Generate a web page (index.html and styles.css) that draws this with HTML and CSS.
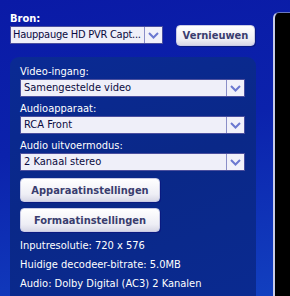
FILE: index.html
```html
<!DOCTYPE html>
<html>
<head>
<meta charset="utf-8">
<link rel="stylesheet" href="styles.css">
</head>
<body>
<div class="screen">
  <div class="main">
    <div class="top">
      <div class="label bold">Bron:</div>
      <div class="row">
        <div class="select sel-src"><span class="val val-src">Hauppauge HD PVR Capt...</span><span class="arrow"><svg width="11" height="7" viewBox="0 0 11 7"><path d="M1 1 L5.5 5.5 L10 1" fill="none" stroke="#6b78d0" stroke-width="2"/></svg></span></div>
        <button class="btn btn-refresh">Vernieuwen</button>
      </div>
    </div>
    <div class="panel">
      <div class="label">Video-ingang:</div>
      <div class="select"><span class="val">Samengestelde video</span><span class="arrow"><svg width="11" height="7" viewBox="0 0 11 7"><path d="M1 1 L5.5 5.5 L10 1" fill="none" stroke="#6b78d0" stroke-width="2"/></svg></span></div>
      <div class="label gap">Audioapparaat:</div>
      <div class="select"><span class="val">RCA Front</span><span class="arrow"><svg width="11" height="7" viewBox="0 0 11 7"><path d="M1 1 L5.5 5.5 L10 1" fill="none" stroke="#6b78d0" stroke-width="2"/></svg></span></div>
      <div class="label gap">Audio uitvoermodus:</div>
      <div class="select"><span class="val">2 Kanaal stereo</span><span class="arrow"><svg width="11" height="7" viewBox="0 0 11 7"><path d="M1 1 L5.5 5.5 L10 1" fill="none" stroke="#6b78d0" stroke-width="2"/></svg></span></div>
      <div class="buttons">
        <button class="btn btn-wide">Apparaatinstellingen</button>
        <button class="btn btn-wide">Formaatinstellingen</button>
      </div>
      <div class="info">
        <div>Inputresolutie: 720 x 576</div>
        <div>Huidige decodeer-bitrate: 5.0MB</div>
        <div>Audio: Dolby Digital (AC3) 2 Kanalen</div>
      </div>
    </div>
  </div>
  <div class="side"></div>
</div>
</body>
</html>
```
FILE: styles.css
```css
html, body {
  margin: 0;
  padding: 0;
}
body {
  width: 290px;
  height: 296px;
  overflow: hidden;
  font-family: "DejaVu Sans Condensed", "DejaVu Sans", sans-serif;
  font-size: 11px;
  color: #ffffff;
}
.screen {
  display: flex;
  width: 290px;
  height: 296px;
  background: linear-gradient(170deg, #0a1aa6 0%, #0b22ac 45%, #1240c0 100%);
}
.main {
  width: 263px;
  padding-left: 10px;
  display: flex;
  flex-direction: column;
}
.top {
  padding-top: 12px;
}
.label {
  line-height: 14px;
  height: 14px;
  white-space: nowrap;
}
.bold {
  font-weight: bold;
}
.row {
  display: flex;
  align-items: flex-start;
}
.select {
  display: flex;
  height: 18px;
  box-sizing: border-box;
  border: 1px solid #4b4f9e;
  background: #efeff9;
  color: #0a0a40;
}
.sel-src {
  width: 153px;
}
.val {
  flex: 1;
  padding-left: 3px;
  line-height: 16px;
  white-space: nowrap;
}
.val-src {
  padding-left: 2px;
  letter-spacing: -0.25px;
}
.arrow {
  width: 17px;
  border-left: 1px solid #8a8ec8;
  display: flex;
  align-items: center;
  justify-content: center;
  background: #f1f1fa;
}
.btn {
  font-family: "DejaVu Sans Condensed", "DejaVu Sans", sans-serif;
  font-weight: bold;
  font-size: 11px;
  color: #3a3d6e;
  background: linear-gradient(#ffffff, #eeeef5 70%, #d8d8e6);
  border: 1px solid #c9cbe6;
  border-radius: 4px;
  padding: 0;
  box-shadow: 1px 1px 0 #0a1a80;
}
.btn-refresh {
  margin-left: 13px;
  margin-top: -1px;
  width: 79px;
  height: 21px;
}
.panel {
  margin-top: 11px;
  width: 246px;
  flex: 1;
  box-sizing: border-box;
  padding: 7px 11px 0 10px;
  border-radius: 9px 9px 0 0;
  background: linear-gradient(160deg, #0a2a94 0%, #0a2888 50%, #0a2a90 100%);
}
.panel .label {
  height: 15px;
  line-height: 15px;
}
.panel .gap {
  margin-top: 4px;
}
.buttons {
  display: flex;
  flex-direction: column;
  gap: 6px;
  margin-top: 7px;
}
.btn-wide {
  width: 140px;
  height: 24px;
}
.info {
  margin-top: 4px;
  line-height: 19px;
  white-space: nowrap;
}
.side {
  margin-top: 12px;
  flex: 1;
  background: #000000;
  border-left: 2px solid #c8cce8;
  border-top: 1px solid #6a78c0;
  border-radius: 6px 0 0 0;
}
```
